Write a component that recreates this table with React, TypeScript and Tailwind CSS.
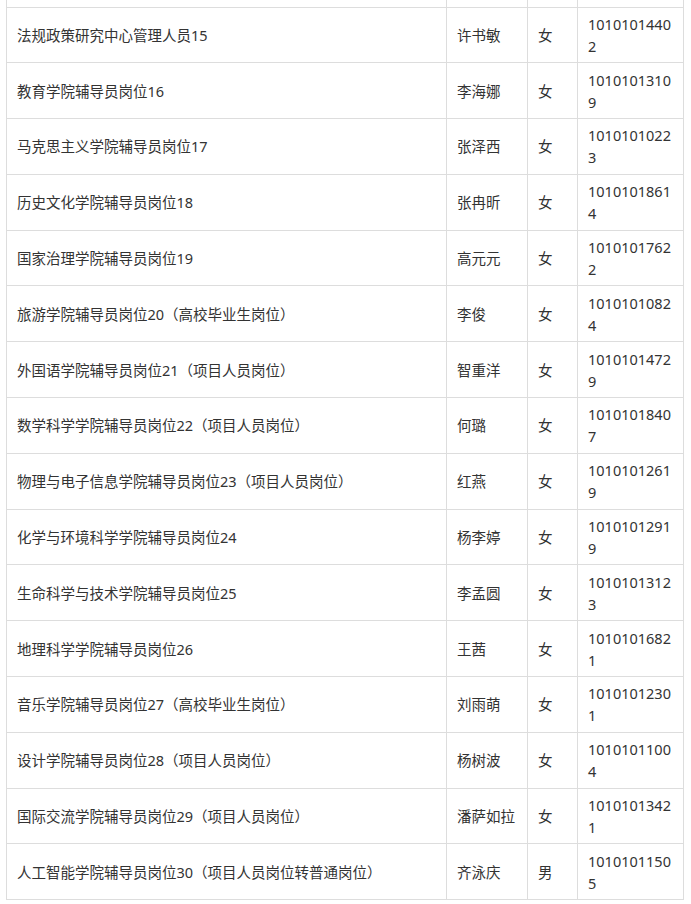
const rows: [string, string, string, string][] = [
  ['法规政策研究中心管理人员15', '许书敏', '女', '10101014402'],
  ['教育学院辅导员岗位16', '李海娜', '女', '10101013109'],
  ['马克思主义学院辅导员岗位17', '张泽西', '女', '10101010223'],
  ['历史文化学院辅导员岗位18', '张冉昕', '女', '10101018614'],
  ['国家治理学院辅导员岗位19', '高元元', '女', '10101017622'],
  ['旅游学院辅导员岗位20（高校毕业生岗位）', '李俊', '女', '10101010824'],
  ['外国语学院辅导员岗位21（项目人员岗位）', '智重洋', '女', '10101014729'],
  ['数学科学学院辅导员岗位22（项目人员岗位）', '何璐', '女', '10101018407'],
  ['物理与电子信息学院辅导员岗位23（项目人员岗位）', '红燕', '女', '10101012619'],
  ['化学与环境科学学院辅导员岗位24', '杨李婷', '女', '10101012919'],
  ['生命科学与技术学院辅导员岗位25', '李孟圆', '女', '10101013123'],
  ['地理科学学院辅导员岗位26', '王茜', '女', '10101016821'],
  ['音乐学院辅导员岗位27（高校毕业生岗位）', '刘雨萌', '女', '10101012301'],
  ['设计学院辅导员岗位28（项目人员岗位）', '杨树波', '女', '10101011004'],
  ['国际交流学院辅导员岗位29（项目人员岗位）', '潘萨如拉', '女', '10101013421'],
  ['人工智能学院辅导员岗位30（项目人员岗位转普通岗位）', '齐泳庆', '男', '10101011505'],
];

const cell = 'border border-[#dddddd] px-[10px] align-middle';

export default function App() {
  return (
    <div
      className="w-[691px] h-[904px] bg-white overflow-hidden text-[#333333] text-[14.5px] leading-[22px]"
      style={{ fontFamily: '"Noto Sans", "Noto Sans CJK SC", sans-serif' }}
    >
      <table className="ml-[6px] w-[677px] table-fixed border-collapse">
        <colgroup>
          <col className="w-[440px]" />
          <col className="w-[81px]" />
          <col className="w-[50px]" />
          <col className="w-[106px]" />
        </colgroup>
        <tbody>
          {/* tail of the previous record, cut off at the top */}
          <tr className="h-[7px]">
            <td className="border-x border-[#dddddd] p-0" />
            <td className="border-x border-[#dddddd] p-0" />
            <td className="border-x border-[#dddddd] p-0" />
            <td className="border-x border-[#dddddd] p-0" />
          </tr>
          {rows.map(([post, name, sex, id]) => (
            <tr key={id} className="h-[55.8px]">
              <td className={cell}>{post}</td>
              <td className={cell}>{name}</td>
              <td className={cell}>{sex}</td>
              <td className={`${cell} break-all`}>
                {id.slice(0, 10)}
                <br />
                {id.slice(10)}
              </td>
            </tr>
          ))}
        </tbody>
      </table>
    </div>
  );
}
